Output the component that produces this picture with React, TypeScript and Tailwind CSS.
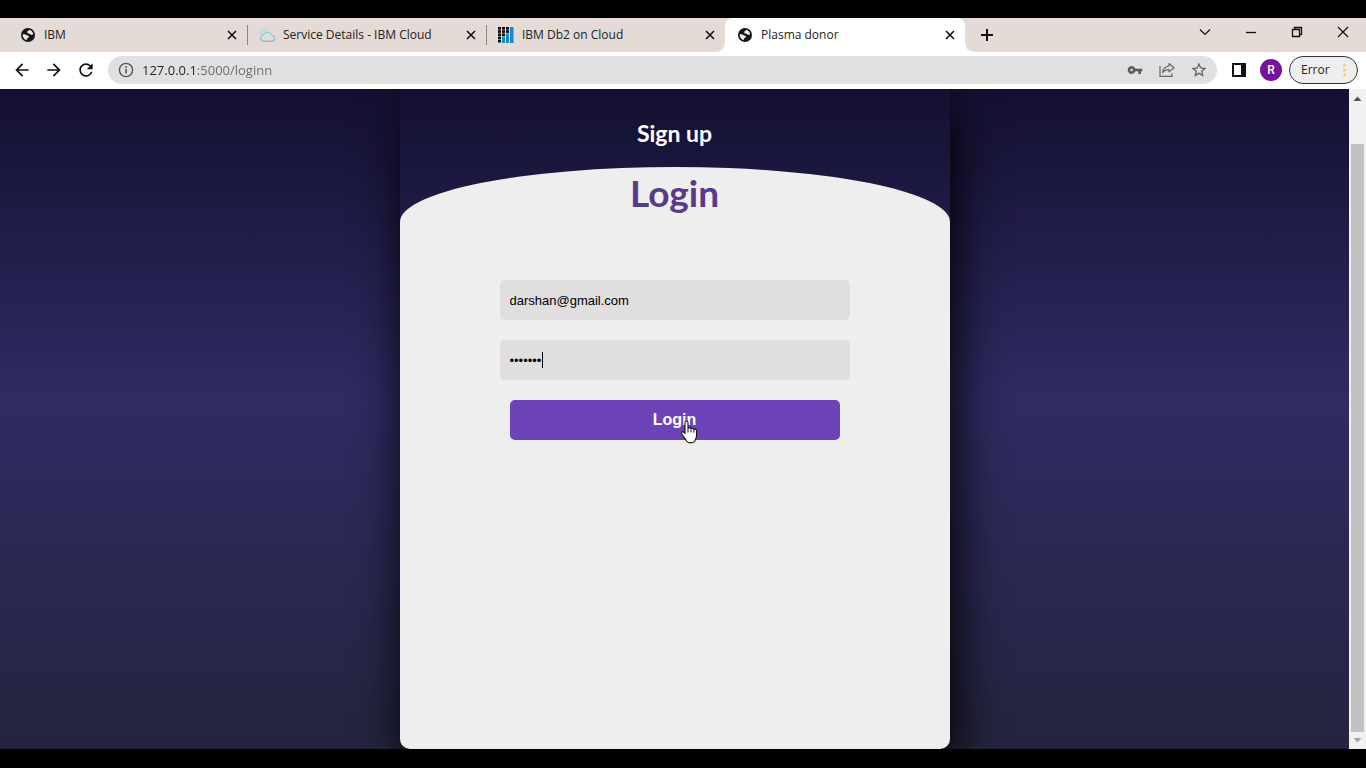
import type { ReactNode } from "react";
import { MdArrowBack, MdArrowForward, MdRefresh, MdVpnKey, MdStarOutline } from "react-icons/md";

const CloseIcon = () => (
  <svg viewBox="0 0 10 10" className="size-[10px]" stroke="#111" strokeWidth="1.6" fill="none">
    <path d="M1 1l8 8M9 1l-8 8" />
  </svg>
);

const GlobeIcon = () => (
  <svg viewBox="0 0 14 14" className="size-[14px]">
    <circle cx="7" cy="7" r="7" fill="#151518" />
    <path
      d="M1.700 6.300c1.500-.3 3.300.2 4.300 1 .8.700 1.900.5 2 1.300.1.900-1 1-1.600 1.600-.6.500-.4 1.500-1 2C3 11.500 1.500 9.300 1.700 6.300z"
      fill="#f0ebe9"
    />
    <path
      d="M8.300 1.800c-.2 1-1.300.9-1.800 1.500-.4.600.2 1.200-.3 1.700 1 .9 2.200.4 3 1.200.6.600 1.500.7 3 .4C12.200 4.300 10.600 2.300 8.300 1.800z"
      fill="#f0ebe9"
    />
  </svg>
);

const CloudIcon = () => (
  <svg viewBox="0 0 16 16" className="size-4" fill="none" strokeWidth="1">
    <defs>
      <linearGradient id="cloud" x1="0" y1="0" x2="0" y2="1">
        <stop offset="0" stopColor="#6fd3e0" />
        <stop offset="1" stopColor="#6f9df5" />
      </linearGradient>
    </defs>
    <path d="M4 14.2h8.4a2.9 2.9 0 0 0 .5-5.8A4.4 4.4 0 0 0 4.600 7.900 3.200 3.200 0 0 0 4 14.200z" stroke="url(#cloud)" />
    <path d="M3.200 7.200a3 3 0 0 1 4.300-3.200M6 .5v1.800M1.700 2.200l1.300 1.300M.3 6.500h1.600M10.300 2.200L9 3.500" stroke="#86dbe2" />
  </svg>
);

const Db2Icon = () => (
  <svg viewBox="0 0 16 16" className="size-4">
    <g fill="#111">
      {[0, 3.200, 6.400, 9.600, 12.800].map((y) => <rect key={y} x="0" y={y} width="3" height="2.700" />)}
      {[0, 3.200, 6.400].map((y) => <rect key={y} x="4" y={y} width="3" height="2.700" />)}
      {[0, 3.200].map((y) => <rect key={y} x="8" y={y} width="3" height="2.700" />)}
    </g>
    <g fill="#1689c9">
      <rect x="4" y="9.600" width="3" height="6.400" />
      <rect x="8" y="6.400" width="3" height="9.600" />
      <rect x="12" y="0" width="3.500" height="16" />
    </g>
  </svg>
);

type TabProps = { title: string; icon: ReactNode; active?: boolean; divider?: boolean };

function Tab({ title, icon, active, divider }: TabProps) {
  return (
    <div
      className={
        "relative flex min-w-0 flex-1 items-center gap-2 pr-[10px] pl-3 " +
        (active ? "max-w-[240px] rounded-t-lg bg-white" : "max-w-[239px]")
      }
    >
      {active && (
        <>
          <span className="absolute bottom-0 -left-2 size-2 bg-[radial-gradient(circle_at_0_0,transparent_7px,white_8px)]" />
          <span className="absolute -right-2 bottom-0 size-2 bg-[radial-gradient(circle_at_100%_0,transparent_7px,white_8px)]" />
        </>
      )}
      <span className="flex w-4 shrink-0 justify-center">{icon}</span>
      <a href="#" className="flex-1 truncate text-xs leading-4 text-[#222]">{title}</a>
      <button aria-label={"Close " + title} className="shrink-0"><CloseIcon /></button>
      {divider && <span className="absolute top-[7px] -right-px h-5 w-px bg-[#8d8583]" />}
    </div>
  );
}

function WindowButton({ label, children }: { label: string; children: ReactNode }) {
  return (
    <button aria-label={label} className="flex h-7 w-[46px] items-center justify-center">
      <svg viewBox="0 0 12 12" className="size-3" fill="none" stroke="#111" strokeWidth="1.200">{children}</svg>
    </button>
  );
}

function TabStrip() {
  return (
    <header className="flex h-[34px] shrink-0 bg-[#e4dad6] pl-2">
      <nav className="flex min-w-0 flex-1" aria-label="Tabs">
        <Tab title="IBM" icon={<GlobeIcon />} divider />
        <Tab title="Service Details - IBM Cloud" icon={<CloudIcon />} divider />
        <Tab title="IBM Db2 on Cloud" icon={<Db2Icon />} />
        <Tab title="Plasma donor" icon={<GlobeIcon />} active />
        <button aria-label="New tab" className="ml-4 flex items-center">
          <svg viewBox="0 0 12 12" className="size-3" stroke="#111" strokeWidth="2"><path d="M6 0v12M0 6h12" /></svg>
        </button>
      </nav>
      <WindowButton label="Search tabs"><path d="M1 3.500l5 5 5-5" /></WindowButton>
      <WindowButton label="Minimize"><path d="M1 6.500h10" strokeWidth="1.300" /></WindowButton>
      <WindowButton label="Restore">
        <path d="M1.500 3.500h7v7h-7zM3.500 3.500v-2h7v7h-2" strokeWidth="1.300" />
      </WindowButton>
      <WindowButton label="Close"><path d="M1 1l10 10M11 1L1 11" /></WindowButton>
    </header>
  );
}

function Toolbar() {
  return (
    <div className="flex h-[37px] shrink-0 items-center bg-white pr-2 pb-px pl-3 text-[#111]">
      <div className="flex gap-3">
        <button aria-label="Back"><MdArrowBack className="size-5" /></button>
        <button aria-label="Forward"><MdArrowForward className="size-5" /></button>
        <button aria-label="Reload"><MdRefresh className="size-5" /></button>
      </div>
      <div className="ml-3 flex h-7 flex-1 items-center rounded-full bg-[#e0e0e0] px-[9px] text-[#5c5c5c]">
        <svg viewBox="0 0 18 18" className="size-[18px]" fill="none" stroke="#55565a" strokeWidth="1.400">
          <circle cx="9" cy="9" r="6.600" />
          <path d="M9 8v4.500M9 5.200v1.700" strokeWidth="1.600" />
        </svg>
        <input
          aria-label="Address"
          defaultValue="127.0.0.1:5000/loginn"
          className="ml-[7px] min-w-0 flex-1 bg-[linear-gradient(to_right,#202124_54px,#666a6f_54px)] bg-clip-text text-[13px] leading-5 text-transparent outline-none"
        />
        <div className="flex items-center gap-[14px]">
          <button aria-label="Passwords"><MdVpnKey className="size-[18px] p-px" /></button>
          <button aria-label="Share">
            <svg viewBox="-1 -1 18 18" className="size-[18px]" fill="none" stroke="#666" strokeWidth="1.200">
              <path d="M1 4v10.400h12V11.500" />
              <path d="M10 1.500l5 4.200-5 4.200V7.600c-3 0-5 .8-6.500 3C4 7 6.500 4.500 10 4z" strokeLinejoin="round" />
            </svg>
          </button>
          <button aria-label="Bookmark"><MdStarOutline className="size-[18px]" /></button>
        </div>
      </div>
      <button aria-label="Side panel" className="ml-[15px]">
        <svg viewBox="0 0 14 14" className="size-[14px]">
          <path d="M1 1h12v12H1z" fill="none" stroke="#111" strokeWidth="2" />
          <path d="M9 0h5v14H9z" fill="#111" />
        </svg>
      </button>
      <button className="ml-[14px] size-[22px] rounded-full bg-[#74149b] font-[Roboto,sans-serif] text-xs font-medium text-white">R</button>
      <button className="ml-[7px] flex h-7 w-[69px] items-center justify-between rounded-full border border-[#333] bg-[#eee] px-[11px] text-xs text-[#222]">
        Error
        <svg viewBox="0 0 3 14" className="h-[14px] w-[3px]" fill="#f9cf6b">
          <circle cx="1.500" cy="2" r="1.500" /><circle cx="1.500" cy="7" r="1.500" /><circle cx="1.500" cy="12" r="1.500" />
        </svg>
      </button>
    </div>
  );
}

function Scrollbar() {
  return (
    <div className="flex w-[17px] shrink-0 flex-col items-center bg-[#f1f1f1]">
      <svg viewBox="0 0 17 17" className="h-[17px] w-full"><path d="M4.500 12L8.500 7.500l4 4.500z" fill="#505050" /></svg>
      <div className="flex w-full flex-1 flex-col px-[2px] pt-[38px]">
        <div className="flex-1 bg-[#c1c1c1]" />
      </div>
      <svg viewBox="0 0 17 17" className="h-[17px] w-full"><path d="M4.500 6l4 4.500 4-4.500z" fill="#a3a3a3" /></svg>
    </div>
  );
}

const HandCursor = () => (
  <svg viewBox="0 0 18 24" className="pointer-events-none absolute top-5 left-1/2 ml-[5px] h-6 w-[18px]">
    <path
      d="M5 2.500c0-2 3-2 3 0v6.200c.4-1.500 2.800-1.400 3 .3.600-1.200 2.700-1 2.900.6.600-.9 2.600-.6 2.600 1V16c0 2-1.300 3.200-1.600 5-1.500 2.500-7 2.500-8.500 0-.7-2-2.400-3.300-3.700-5.500-.8-1.300-1.500-2.300-1-3.300.7-1 2-.4 3.300 1.300z"
      fill="#fff"
      stroke="#111"
      strokeWidth="1.100"
      strokeLinejoin="round"
    />
    <path d="M8 9v3.500M11 9.500v3M13.900 10.200v2.500" stroke="#111" strokeWidth="1" fill="none" />
  </svg>
);

const fieldClass =
  "block h-10 w-full rounded-[5px] bg-[#e0dede] px-[10px] font-['Liberation_Sans',Arial,sans-serif] text-[13px] text-black outline-none";

function LoginCard() {
  return (
    <main className="flex w-full max-w-[550px] flex-col overflow-hidden rounded-b-[10px] bg-[linear-gradient(to_bottom,#131031,#302b63_47%,#24243e)] shadow-[5px_20px_50px_#000]">
      <h2 className="flex h-[78px] shrink-0 items-center justify-center pt-[10px] text-[23px] leading-7 font-bold text-white">
        <button>Sign up</button>
      </h2>
      <form className="flex flex-1 flex-col items-center rounded-t-[50%_55px] bg-[#eee]" onSubmit={(e) => e.preventDefault()}>
        <h1 className="pt-1 text-[37px] leading-[44px] font-bold text-[#573b8a]">Login</h1>
        <div className="mt-[65px] flex w-full max-w-[350px] flex-col gap-5">
          <input aria-label="Email" type="email" defaultValue="darshan@gmail.com" className={fieldClass} />
          <div className="relative">
            <input aria-label="Password" type="password" defaultValue="darshan" className={fieldClass} />
            <span className="absolute top-3 left-[42px] h-4 w-px bg-black" />
          </div>
          <div className="relative px-[10px]">
            <button type="submit" className="h-10 w-full rounded-[5px] bg-[#6d44b8] font-['Liberation_Sans',Arial,sans-serif] text-base font-bold text-white">
              Login
            </button>
            <HandCursor />
          </div>
        </div>
      </form>
    </main>
  );
}

export default function App() {
  return (
    <div className="flex h-screen flex-col bg-black pt-[18px] pb-[19px] font-['Open_Sans','Noto_Sans',sans-serif]">
      <TabStrip />
      <Toolbar />
      <div className="flex min-h-0 flex-1">
        <div className="flex min-w-0 flex-1 justify-center overflow-hidden bg-[linear-gradient(to_bottom,#131031,#302b63_47%,#24243e)] font-['Lato',sans-serif]">
          <LoginCard />
        </div>
        <Scrollbar />
      </div>
    </div>
  );
}
